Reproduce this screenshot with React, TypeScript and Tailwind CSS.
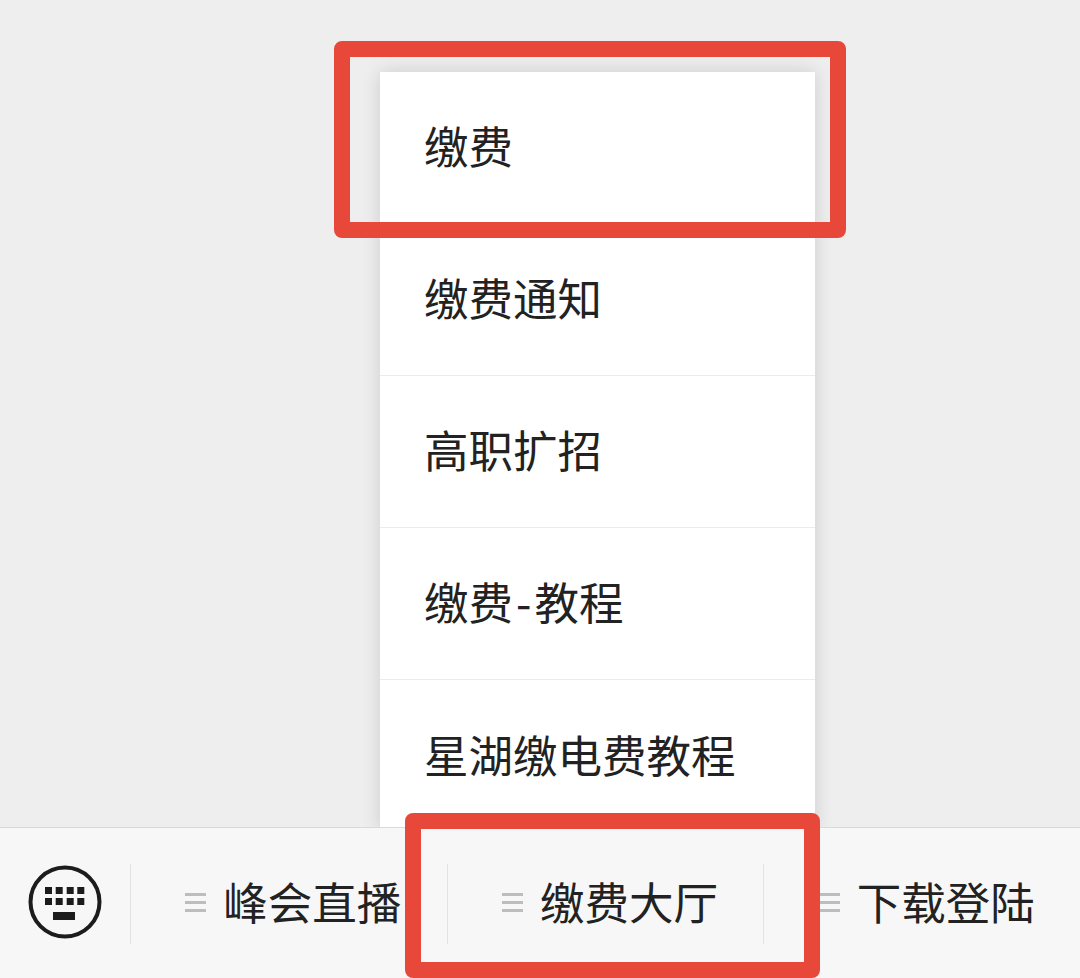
const MENU_ITEMS = [
  "缴费",
  "缴费通知",
  "高职扩招",
  <>
    缴费<span className="mx-[3px]">-</span>教程
  </>,
  "星湖缴电费教程",
];
const NAV_ITEMS = ["峰会直播", "缴费大厅", "下载登陆"];

const KeyboardIcon = () => (
  <svg width="74" height="74" viewBox="0 0 74 74" fill="none">
    <circle cx="37" cy="37" r="34.5" stroke="#1c1c1c" strokeWidth="4" />
    <g fill="#1c1c1c">
      <rect x="17" y="22" width="7" height="7" />
      <rect x="27.7" y="22" width="7" height="7" />
      <rect x="38.7" y="22" width="7" height="7" />
      <rect x="49.3" y="22" width="7" height="7" />
      <rect x="17" y="33" width="7" height="7" />
      <rect x="27.7" y="33" width="7" height="7" />
      <rect x="38.7" y="33" width="7" height="7" />
      <rect x="49.3" y="33" width="7" height="7" />
      <rect x="25" y="47" width="22" height="8" />
    </g>
  </svg>
);

const MenuLines = () => (
  <span className="flex w-[21px] flex-col gap-[5px]">
    <span className="h-[3px] bg-[#bdbdbd]" />
    <span className="h-[3px] bg-[#bdbdbd]" />
    <span className="h-[3px] bg-[#bdbdbd]" />
  </span>
);

export default function App() {
  return (
    <div className="relative h-[978px] w-[1080px] overflow-hidden bg-[#eeeeee] font-['Noto_Sans_CJK_SC','Noto_Sans',sans-serif] text-[#222222]">
      <div className="h-[827px] overflow-hidden pl-[380px] pt-[72px]">
        <div className="w-[435px] bg-white shadow-[0_0_18px_rgba(0,0,0,0.14)]">
          {MENU_ITEMS.map((item, i) => (
            <div
              key={i}
              className="flex h-[152px] items-center border-b border-[#ececec] pb-[4px] pl-[44px] text-[44.5px] leading-none last:border-b-0"
            >
              <span>{item}</span>
            </div>
          ))}
        </div>
      </div>

      <div className="flex h-[151px] border-t border-[#d9d9d9] bg-[#f7f7f7] pb-[2px]">
        <div className="flex w-[130px] items-center justify-center">
          <KeyboardIcon />
        </div>
        {NAV_ITEMS.map((item) => (
          <div key={item} className="relative flex flex-1 items-center justify-center pl-[10px]">
            <span className="absolute left-0 top-[36px] h-[80px] w-px bg-[#e3e3e3]" />
            <MenuLines />
            <span className="mb-[2px] ml-[17px] text-[44.5px] leading-none">{item}</span>
          </div>
        ))}
      </div>

      <div className="absolute left-[334px] top-[41px] h-[197px] w-[512px] rounded-[8px] border-[16px] border-[#e8483a]" />
      <div className="absolute left-[405px] top-[813px] h-[165px] w-[415px] rounded-[8px] border-[16px] border-[#e8483a]" />
    </div>
  );
}
